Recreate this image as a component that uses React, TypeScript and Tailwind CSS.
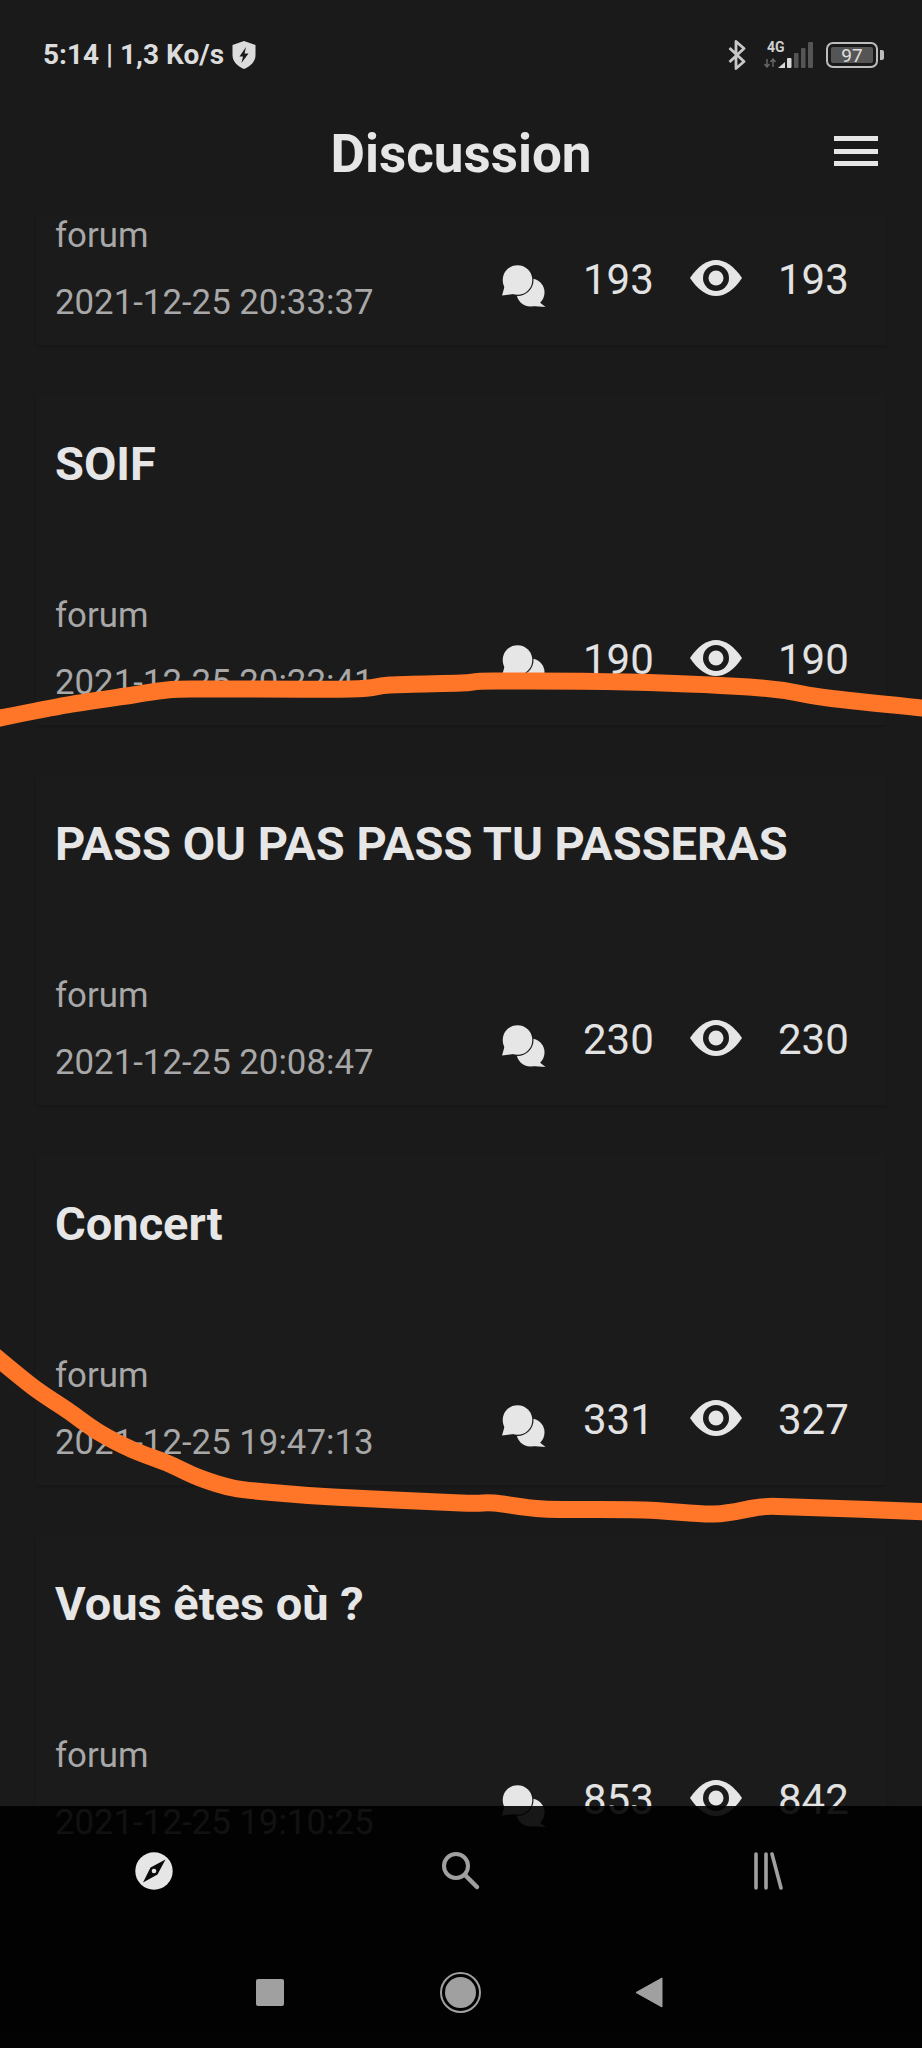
import React from 'react';

const POSTS = [
  { title: '', date: '2021-12-25 20:33:37', replies: 193, views: 193 },
  { title: 'SOIF', date: '2021-12-25 20:22:41', replies: 190, views: 190 },
  { title: 'PASS OU PAS PASS TU PASSERAS', date: '2021-12-25 20:08:47', replies: 230, views: 230 },
  { title: 'Concert', date: '2021-12-25 19:47:13', replies: 331, views: 327 },
  { title: 'Vous êtes où ?', date: '2021-12-25 19:10:25', replies: 853, views: 842 },
];

// hand drawn scribbles on top of the screenshot
const SCRIBBLES = [
  [[-10, 720], [67, 705], [133, 695], [167, 690], [200, 689], [350, 689], [390, 685], [461, 683], [494, 681], [628, 682], [761, 688], [828, 698], [932, 709]],
  [[-10, 1352], [33, 1387], [67, 1410], [100, 1433], [133, 1450], [167, 1463], [200, 1478], [233, 1488], [267, 1492], [333, 1497], [461, 1503], [494, 1503], [544, 1509], [644, 1510], [714, 1514], [761, 1507], [794, 1507], [932, 1512]],
];

const smooth = (pts: number[][]) => {
  let d = `M${pts[0][0]} ${pts[0][1]}`;
  for (let i = 0; i < pts.length - 1; i++) {
    const p0 = pts[Math.max(i - 1, 0)];
    const p1 = pts[i];
    const p2 = pts[i + 1];
    const p3 = pts[Math.min(i + 2, pts.length - 1)];
    d += ` C${p1[0] + (p2[0] - p0[0]) / 6} ${p1[1] + (p2[1] - p0[1]) / 6} ${p2[0] - (p3[0] - p1[0]) / 6} ${p2[1] - (p3[1] - p1[1]) / 6} ${p2[0]} ${p2[1]}`;
  }
  return d;
};

const ChatIcon = () => (
  <svg width="44" height="43" viewBox="0 0 44 43" className="mt-[14px] shrink-0">
    <circle cx="28.5" cy="27.5" r="14" fill="#e6e6e6" />
    <path d="M36 36 L43.5 42 L30 41 Z" fill="#e6e6e6" />
    <circle cx="15.5" cy="15" r="16" fill="#1b1b1b" />
    <circle cx="15.5" cy="15" r="14.8" fill="#e6e6e6" />
    <path d="M3 20 L0 30.5 L12 29 Z" fill="#e6e6e6" />
  </svg>
);

const EyeIcon = () => (
  <svg width="52" height="36" viewBox="0 0 52 36" className="shrink-0 -mt-[4px] ml-[2px]">
    <path d="M0 18 C8 6 17 0 26 0 S44 6 52 18 C44 30 35 36 26 36 S8 30 0 18 Z" fill="#e6e6e6" />
    <circle cx="26" cy="18" r="13" fill="#1b1b1b" />
    <circle cx="26" cy="18" r="7.5" fill="#e6e6e6" />
  </svg>
);

const PostCard = ({ post }: { post: (typeof POSTS)[number] }) => (
  <div className="h-[330px] mx-[36px] pl-[19px] pr-[40px] flex flex-col justify-between bg-[#1b1b1b] shadow-[0_2px_3px_rgba(0,0,0,0.15)]">
    <h2 className="mt-[45px] h-[48px] leading-[48px] text-[47px] font-bold text-[#e6e6e6] whitespace-nowrap">{post.title}</h2>
    <div className="flex items-end justify-between">
      <div className="pb-[21px] text-[34.8px] text-[#a8a8a8]">
        <p className="h-[44px] leading-[44px] mb-[23px]">forum</p>
        <p className="h-[44px] leading-[44px]">{post.date}</p>
      </div>
      <div className="flex items-center gap-[38px] pb-[37px] text-[42px] text-[#e2e2e2]">
        <ChatIcon />
        <span className="w-[67px] h-[44px] leading-[44px] -ml-[1px]">{post.replies}</span>
        <EyeIcon />
        <span className="w-[68px] h-[44px] leading-[44px] -ml-[2px]">{post.views}</span>
      </div>
    </div>
  </div>
);

const StatusBar = () => (
  <div className="h-[110px] pl-[43px] pr-[38px] flex items-center justify-between">
    <div className="flex items-center gap-[8px] text-[#dcdcdc] text-[28px] font-bold">
      <span>5:14 | 1,3 Ko/s</span>
      <svg width="24" height="28" viewBox="0 0 24 28">
        <path d="M12 0 L23.5 4 V14 C23.5 21 18 25.5 12 28 C6 25.5 0.5 21 0.5 14 V4 Z" fill="#dcdcdc" />
        <path d="M14 6 L7.5 15.5 H11 L9.5 22 L16.5 12.5 H12.5 Z" fill="#1a1a1a" />
      </svg>
    </div>
    <div className="flex items-center">
      <svg width="18" height="30" viewBox="0 0 18 30" className="mr-[17px]">
        <path d="M1.5 8 L16 21.5 L8 28.5 V1.5 L16 8.5 L1.5 22" fill="none" stroke="#c8c8c8" strokeWidth="2.8" strokeLinejoin="round" />
      </svg>
      <div className="relative w-[51px] h-[28px] mr-[12px]">
        <span className="absolute left-[4px] -top-[1px] text-[14px] leading-[14px] font-bold text-[#d0d0d0]">4G</span>
        <svg width="51" height="28" viewBox="0 0 51 28" className="absolute inset-0">
          <path d="M4 18 V26 M1.5 23 L4 26 L6.5 23 M10 26 V18 M7.5 21 L10 18 L12.5 21" fill="none" stroke="#6a6a6a" strokeWidth="1.4" />
          <path d="M15 27 L22 21 V27 Z" fill="#d8d8d8" />
          <rect x="24" y="17" width="4.5" height="10" rx="1" fill="#d8d8d8" />
          <rect x="31" y="12" width="4.5" height="15" rx="1" fill="#555" />
          <rect x="38" y="7" width="4.5" height="20" rx="1" fill="#555" />
          <rect x="45" y="1" width="5" height="26" rx="1" fill="#555" />
        </svg>
      </div>
      <div className="w-[52px] h-[26px] p-[3px] rounded-[7px] border-[2.5px] border-[#bdbdbd]">
        <div className="h-full rounded-[2px] bg-[#555] flex items-center justify-center text-[19px] leading-none text-[#e0e0e0]">97</div>
      </div>
      <div className="w-[4px] h-[10px] ml-[2px] rounded-r-[2px] bg-[#bdbdbd]" />
    </div>
  </div>
);

const Header = () => (
  <div className="relative h-[106px] flex items-start justify-center">
    <h1 className="mt-[18px] text-[53px] leading-[52px] font-bold text-[#e6e6e6]">Discussion</h1>
    <div className="absolute right-[44px] top-[26px] w-[44px] flex flex-col gap-[7.5px]">
      <div className="h-[5px] bg-[#e6e6e6]" />
      <div className="h-[5px] bg-[#e6e6e6]" />
      <div className="h-[5px] bg-[#e6e6e6]" />
    </div>
  </div>
);

const BottomNav = () => (
  <div className="absolute left-0 right-0 bottom-0 h-[242px] bg-black/90 z-20">
    <div className="h-[130px] grid grid-cols-3 items-center justify-items-center">
      <svg width="38" height="38" viewBox="0 0 38 38">
        <circle cx="19" cy="19" r="18.7" fill="#e6e6e6" />
        <path d="M30.5 7.5 L22.5 22.5 L8 30.5 L15.5 15.5 Z" fill="#0b0b0b" />
        <circle cx="19" cy="19" r="2.3" fill="#e6e6e6" />
      </svg>
      <svg width="40" height="40" viewBox="0 0 40 40">
        <circle cx="15" cy="15" r="12" fill="none" stroke="#a0a0a0" strokeWidth="4" />
        <path d="M24 24 L36 36" fill="none" stroke="#a0a0a0" strokeWidth="4.5" strokeLinecap="round" />
      </svg>
      <svg width="32" height="38" viewBox="0 0 32 38">
        <path d="M4 2 V36 M14 2 V36 M20 2 L29 36" fill="none" stroke="#a0a0a0" strokeWidth="3.6" strokeLinecap="round" />
      </svg>
    </div>
    <div className="h-[112px] flex justify-center -translate-x-[1px]">
      <div className="w-[190px] flex items-center justify-center">
        <div className="w-[28px] h-[27px] rounded-[2px] bg-[#a0a0a0]" />
      </div>
      <div className="w-[190px] flex items-center justify-center">
        <div className="w-[41px] h-[41px] p-[3px] rounded-full border-[2px] border-[#a0a0a0]">
          <div className="w-full h-full rounded-full bg-[#a0a0a0]" />
        </div>
      </div>
      <div className="w-[190px] flex items-center justify-center">
        <svg width="28" height="31" viewBox="0 0 28 31" className="-ml-[2px]">
          <path d="M27 1 V30 L1 15.5 Z" fill="#a0a0a0" stroke="#a0a0a0" strokeLinejoin="round" />
        </svg>
      </div>
    </div>
  </div>
);

const App: React.FC = () => (
  <div className="relative w-[922px] h-[2048px] overflow-hidden flex flex-col bg-[#1a1a1a] font-[Roboto,sans-serif]">
    <div className="relative z-10 bg-[#1a1a1a]">
      <StatusBar />
      <Header />
    </div>
    <div className="flex flex-col gap-[50px] -mt-[201px]">
      {POSTS.map((post) => (
        <PostCard key={post.date} post={post} />
      ))}
    </div>
    <BottomNav />
    {/* orange marker lines */}
    <svg width="922" height="2048" viewBox="0 0 922 2048" className="absolute inset-0 z-30 pointer-events-none">
      {SCRIBBLES.map((pts) => (
        <path key={pts[0][1]} d={smooth(pts)} fill="none" stroke="#ff7628" strokeWidth="17" strokeLinecap="round" />
      ))}
    </svg>
  </div>
);

export default App;
